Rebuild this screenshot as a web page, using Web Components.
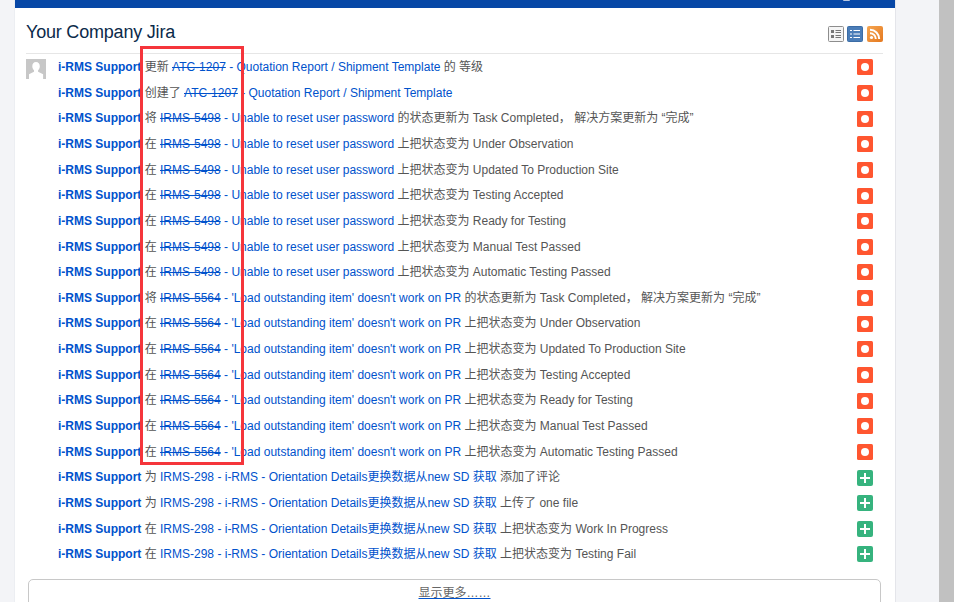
<!DOCTYPE html>
<html>
<head>
<meta charset="utf-8">
<title>Your Company Jira</title>
<style>
  html, body { margin: 0; height: 100%; overflow: hidden; }
  body { background: #f3f4f7; }
</style>
</head>
<body>
<jira-page>
  <activity-stream title="Your Company Jira">
    <activity-row icon="bug" avatar>更新 <issue-link done key="ATC-1207" summary="Quotation Report / Shipment Template"></issue-link> 的 等级</activity-row>
    <activity-row icon="bug">创建了 <issue-link done key="ATC-1207" summary="Quotation Report / Shipment Template"></issue-link></activity-row>
    <activity-row icon="bug">将 <issue-link done key="IRMS-5498" summary="Unable to reset user password"></issue-link> 的状态更新为 Task Completed， 解决方案更新为 “完成”</activity-row>
    <activity-row icon="bug">在 <issue-link done key="IRMS-5498" summary="Unable to reset user password"></issue-link> 上把状态变为 Under Observation</activity-row>
    <activity-row icon="bug">在 <issue-link done key="IRMS-5498" summary="Unable to reset user password"></issue-link> 上把状态变为 Updated To Production Site</activity-row>
    <activity-row icon="bug">在 <issue-link done key="IRMS-5498" summary="Unable to reset user password"></issue-link> 上把状态变为 Testing Accepted</activity-row>
    <activity-row icon="bug">在 <issue-link done key="IRMS-5498" summary="Unable to reset user password"></issue-link> 上把状态变为 Ready for Testing</activity-row>
    <activity-row icon="bug">在 <issue-link done key="IRMS-5498" summary="Unable to reset user password"></issue-link> 上把状态变为 Manual Test Passed</activity-row>
    <activity-row icon="bug">在 <issue-link done key="IRMS-5498" summary="Unable to reset user password"></issue-link> 上把状态变为 Automatic Testing Passed</activity-row>
    <activity-row icon="bug">将 <issue-link done key="IRMS-5564" summary="'Load outstanding item' doesn't work on PR"></issue-link> 的状态更新为 Task Completed， 解决方案更新为 “完成”</activity-row>
    <activity-row icon="bug">在 <issue-link done key="IRMS-5564" summary="'Load outstanding item' doesn't work on PR"></issue-link> 上把状态变为 Under Observation</activity-row>
    <activity-row icon="bug">在 <issue-link done key="IRMS-5564" summary="'Load outstanding item' doesn't work on PR"></issue-link> 上把状态变为 Updated To Production Site</activity-row>
    <activity-row icon="bug">在 <issue-link done key="IRMS-5564" summary="'Load outstanding item' doesn't work on PR"></issue-link> 上把状态变为 Testing Accepted</activity-row>
    <activity-row icon="bug">在 <issue-link done key="IRMS-5564" summary="'Load outstanding item' doesn't work on PR"></issue-link> 上把状态变为 Ready for Testing</activity-row>
    <activity-row icon="bug">在 <issue-link done key="IRMS-5564" summary="'Load outstanding item' doesn't work on PR"></issue-link> 上把状态变为 Manual Test Passed</activity-row>
    <activity-row icon="bug">在 <issue-link done key="IRMS-5564" summary="'Load outstanding item' doesn't work on PR"></issue-link> 上把状态变为 Automatic Testing Passed</activity-row>
    <activity-row icon="add">为 <issue-link key="IRMS-298" summary="i-RMS - Orientation Details更换数据从new SD 获取"></issue-link> 添加了评论</activity-row>
    <activity-row icon="add">为 <issue-link key="IRMS-298" summary="i-RMS - Orientation Details更换数据从new SD 获取"></issue-link> 上传了 one file</activity-row>
    <activity-row icon="add">在 <issue-link key="IRMS-298" summary="i-RMS - Orientation Details更换数据从new SD 获取"></issue-link> 上把状态变为 Work In Progress</activity-row>
    <activity-row icon="add">在 <issue-link key="IRMS-298" summary="i-RMS - Orientation Details更换数据从new SD 获取"></issue-link> 上把状态变为 Testing Fail</activity-row>
  </activity-stream>
</jira-page>

<script>
class JiraPage extends HTMLElement {
  constructor() {
    super();
    this.attachShadow({ mode: "open" });
    this.shadowRoot.innerHTML = `
      <style>
        :host {
          display: flex;
          height: 602px;
          font-family: "Liberation Sans", "Noto Sans CJK SC", sans-serif;
          font-size: 12px;
          color: #555;
        }
        .card {
          margin-left: 14px;
          width: 882px;
          height: 602px;
          box-sizing: border-box;
          background: #fff;
          border-right: 1px solid #e4e5ea;
          border-left: 1px solid #eceef2;
          overflow: hidden;
        }
        .bar { height: 8px; background: #0747a6; position: relative; }
        .avatar-tip {
          position: absolute;
          left: 828px;
          top: 0;
          width: 7px;
          height: 1px;
          border-radius: 0 0 3px 3px;
          background: #b9c8e2;
        }
        .gap { flex: 1; }
        .scroll { width: 15px; background: #c1c1c1; }
        .marker {
          position: absolute;
          left: 140px;
          top: 46px;
          width: 98px;
          height: 413px;
          border: 3px solid #f5353b;
        }
      </style>
      <div class="card">
        <div class="bar"><div class="avatar-tip"></div></div>
        <slot></slot>
      </div>
      <div class="gap"></div>
      <div class="scroll"></div>
      <div class="marker"></div>
    `;
  }
}

class ActivityStream extends HTMLElement {
  constructor() {
    super();
    this.attachShadow({ mode: "open" });
  }

  connectedCallback() {
    const title = this.getAttribute("title") || "";
    this.shadowRoot.innerHTML = `
      <style>
        :host { display: block; padding: 0 12px 0 11px; }
        header {
          display: flex;
          align-items: center;
          justify-content: space-between;
          height: 45px;
          border-bottom: 1px solid #e6e6e6;
        }
        h2 {
          margin: 0;
          font-size: 18px;
          font-weight: 400;
          letter-spacing: -0.2px;
          color: #0b2a4a;
          position: relative;
          top: 2px;
        }
        .tools { display: flex; position: relative; top: 3px; }
        svg { display: block; width: 16px; height: 16px; margin-left: 3px; }
        svg:last-child { margin-left: 4px; }
        .rows { padding-top: 0.5px; }
        .more {
          margin: 11.5px 2px 0;
          height: 40px;
          box-sizing: border-box;
          border: 1px solid #c8c8c8;
          border-radius: 5px;
          text-align: center;
          padding-top: 6px;
          line-height: 14px;
        }
        .more a { color: #666; text-decoration: underline #0052cc; }
      </style>
      <header>
        <h2>${title}</h2>
        <div class="tools">
          <svg viewBox="0 0 16 16">
            <rect x=".5" y=".5" width="15" height="15" rx="1" fill="#f5f5f5" stroke="#8d8d8d"/>
            <path d="M3 4h3v3H3zM3 9h3v3H3z" fill="#777"/>
            <path d="M7.500 4.500h5.500M7.500 6.500h5.500M7.500 9.500h5.500M7.500 11.500h5.500" stroke="#777"/>
          </svg>
          <svg viewBox="0 0 16 16">
            <rect x=".5" y=".5" width="15" height="15" rx="1" fill="#4a7db8" stroke="#3b6ca5"/>
            <path d="M3 4h2v1H3zM3 7.500h2v1H3zM3 11h2v1H3z" fill="#fff"/>
            <path d="M6.500 4.500H13M6.500 8H13M6.500 11.500H13" stroke="#fff"/>
          </svg>
          <svg viewBox="0 0 16 16">
            <defs>
              <linearGradient id="rss" x1="0" y1="0" x2="1" y2="1">
                <stop offset="0" stop-color="#f6a651"/>
                <stop offset="1" stop-color="#e4781f"/>
              </linearGradient>
            </defs>
            <rect width="16" height="16" rx="2" fill="url(#rss)"/>
            <circle cx="4.500" cy="11.500" r="1.600" fill="#fff"/>
            <path d="M3 7.200a5.800 5.800 0 0 1 5.800 5.800M3 3.800a9.200 9.200 0 0 1 9.200 9.200" fill="none" stroke="#fff" stroke-width="2"/>
          </svg>
        </div>
      </header>
      <div class="rows"><slot></slot></div>
      <div class="more"><a href="#">显示更多……</a></div>
    `;
  }
}

class ActivityRow extends HTMLElement {
  constructor() {
    super();
    this.attachShadow({ mode: "open" });
  }

  connectedCallback() {
    const isBug = this.getAttribute("icon") === "bug";
    const hasAvatar = this.hasAttribute("avatar");
    const glyph = isBug
      ? `<rect width="16" height="16" rx="1.500" fill="#ff5630"/><circle cx="8" cy="8" r="4" fill="#fff"/>`
      : `<rect width="16" height="16" rx="2" fill="#36b37e"/><path d="M8 3v10M3 8h10" stroke="#fff" stroke-width="2"/>`;
    this.shadowRoot.innerHTML = `
      <style>
        :host {
          display: flex;
          align-items: center;
          height: 25.65px;
          position: relative;
          white-space: nowrap;
        }
        .avatar {
          position: absolute;
          left: 0;
          top: 4px;
          width: 20px;
          height: 20px;
        }
        .text { flex: 1; padding-left: 32px; position: relative; top: -1.750px; }
        b { color: #0052cc; }
        .icon { width: 16px; height: 16px; margin-right: 10px; display: block; }
      </style>
      ${hasAvatar ? `<svg class="avatar" viewBox="0 0 20 20">
        <rect width="20" height="20" fill="#c7c7c7"/>
        <path d="M10 3c2.400 0 3.800 1.800 3.800 4.200 0 1.700-.7 3.100-1.700 4v1.600l5 2.400V20H3v-4.800l5-2.400v-1.600c-1-.9-1.700-2.300-1.700-4C6.300 4.800 7.600 3 10 3z" fill="#fff"/>
      </svg>` : ""}
      <div class="text"><b>i-RMS Support</b> <slot></slot></div>
      <svg class="icon" viewBox="0 0 16 16">${glyph}</svg>
    `;
  }
}

class IssueLink extends HTMLElement {
  constructor() {
    super();
    this.attachShadow({ mode: "open" });
  }

  connectedCallback() {
    const key = this.getAttribute("key") || "";
    const summary = this.getAttribute("summary") || "";
    this.shadowRoot.innerHTML = `
      <style>
        :host { display: inline; color: #0052cc; }
        .done { text-decoration: line-through; }
      </style>
      <span class="${this.hasAttribute("done") ? "done" : ""}">${key}</span> - ${summary}
    `;
  }
}

customElements.define("jira-page", JiraPage);
customElements.define("activity-stream", ActivityStream);
customElements.define("activity-row", ActivityRow);
customElements.define("issue-link", IssueLink);
</script>
</body>
</html>
